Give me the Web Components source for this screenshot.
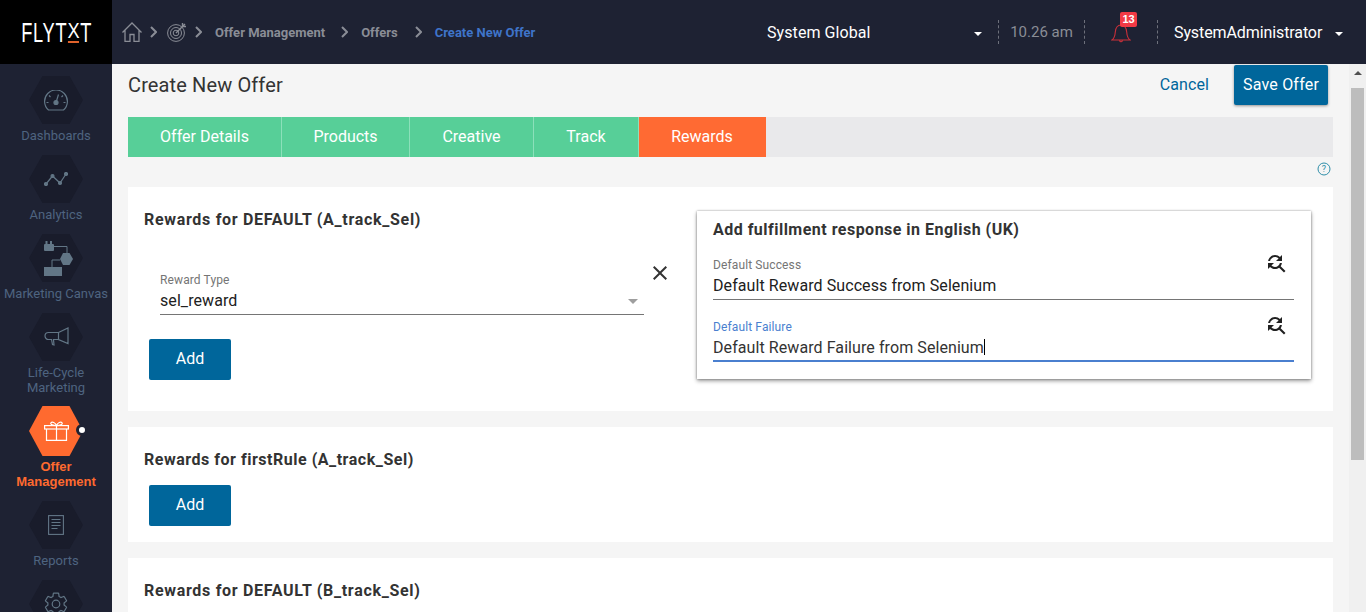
<!DOCTYPE html>
<html><head><meta charset="utf-8"><title>Create New Offer</title>
<style>
html,body{margin:0;height:100%;overflow:hidden}
body{font-family:Roboto,"Liberation Sans",sans-serif;background:#f5f5f5}
</style></head><body>
<app-shell>
  <top-bar slot="top"></top-bar>
  <side-nav slot="side"></side-nav>
  <offer-page slot="main"></offer-page>
</app-shell>
<script>
function def(name,html){
  customElements.define(name,class extends HTMLElement{
    connectedCallback(){
      if(this.shadowRoot)return;
      const r=this.attachShadow({mode:'open'});
      r.innerHTML=typeof html==='function'?html(this):html;
    }
  });
}
def('app-shell',`<style>
:host{display:grid;grid-template-columns:112px 1fr 17px;grid-template-rows:64px 1fr;width:1366px;height:612px;overflow:hidden}
.t{grid-column:1/4}.s{min-height:0;overflow:hidden}.m{min-height:0;overflow:hidden}
</style><div class="t"><slot name="top"></slot></div><div class="s"><slot name="side"></slot></div><div class="m"><slot name="main"></slot></div><scroll-rail></scroll-rail>`);
def('scroll-rail',`<style>
:host{display:flex;flex-direction:column;align-items:center;background:#f0f0f0}
.a{height:24px;padding-top:7px;box-sizing:border-box}
.a i{display:block;width:0;height:0;border:4px solid transparent;border-top:0;border-bottom:4px solid #505050}
.th{width:13px;height:372px;background:#bdbdbd}
</style><div class="a"><i></i></div><div class="th"></div>`);
const chev=m=>`<svg style="margin-left:${m}px;flex:none" width="7" height="12" viewBox="0 0 7 12" fill="none" stroke="#8a8d96" stroke-width="2"><path d="M1 1l5 5-5 5"/></svg>`;
def('top-bar',`<style>
:host{display:flex;height:64px;background:#1e2233;color:#fff;align-items:stretch}
.lw{width:112px;background:#000;display:flex;align-items:center;justify-content:center;overflow:hidden;flex:none}
.logo{font:400 28px/20px "Liberation Sans",sans-serif;height:20px;letter-spacing:1.2px;transform:scaleX(.65);white-space:nowrap;position:relative;margin-left:1px;margin-top:2px}
.logo u{text-decoration:none;position:relative;display:inline-block}
.logo u b{font-weight:400;display:inline-block;transform:scaleY(.78);transform-origin:50% 0}
.logo u::after{content:"";position:absolute;left:1px;right:2px;top:18px;height:2px;background:#e0622b}
.crumbs{display:flex;align-items:center;flex:none;width:640px;padding-left:10px;box-sizing:border-box;font:700 13px/1 Roboto,sans-serif;color:#8a8d96}
.cur{color:#3f74c9}
.sys{font:400 16px/1 Roboto,sans-serif;color:#fff;width:215px;display:flex;align-items:center;justify-content:space-between;box-sizing:border-box;margin-left:15px;padding-top:2px;flex:none}
.sys span{letter-spacing:.08px}
.tri{width:0;height:0;border:4.500px solid transparent;border-top:4.500px solid #fff;border-bottom:0;display:block;flex:none;margin-top:1px}
.d{width:0;height:24px;border-left:1px dashed #6d707b;align-self:center;flex:none}
.time{font:400 15px/1 Roboto,sans-serif;color:#8a8d96;width:85px;text-align:center;align-self:center;flex:none}
.bell{width:72px;position:relative;display:flex;justify-content:center;align-items:flex-start;flex:none}
.bell svg{margin-top:24px;margin-left:-1px}
.badge{position:absolute;left:35px;top:12px;width:17px;height:15px;background:#f23a45;border-radius:2px;font:700 11px/15px "Liberation Sans",sans-serif;text-align:center;color:#fff}
.user{font:400 16px/1 Roboto,sans-serif;display:flex;align-items:center;margin-left:16px;color:#fff;padding-top:2px;letter-spacing:-.1px}
.user .tri{margin-left:13px}
</style>
<div class="lw"><div class="logo">FLYT<u><b>X</b></u>T</div></div>
<div class="crumbs">
<svg width="20" height="20" viewBox="0 0 20 20" fill="none" stroke="#8a8d96" stroke-width="1.300" style="flex:none"><path d="M.5 10.500 10 1l9.500 9.500M3 8.500v11h5v-7h4v7h5v-11"/></svg>
${chev(8)}
<svg width="20" height="20" viewBox="0 0 20 20" fill="none" stroke="#8a8d96" stroke-width="1" style="margin-left:10px;flex:none"><circle cx="9" cy="11" r="8.400"/><circle cx="9" cy="11" r="5.500"/><circle cx="9" cy="11" r="2.800"/><path d="M9 11 18 2M15.500 1v3.500H19" stroke-width="1.400"/></svg>
${chev(8)}
<span style="margin-left:13px">Offer Management</span>
${chev(16)}
<span style="margin-left:13px">Offers</span>
${chev(17)}
<span class="cur" style="margin-left:13px">Create New Offer</span>
</div>
<div class="sys"><span>System Global</span><i class="tri"></i></div>
<div class="d" style="margin-left:16px"></div>
<div class="time">10.26 am</div>
<div class="d"></div>
<div class="bell"><svg width="20" height="19" viewBox="0 0 20 19" fill="none" stroke="#c9303a" stroke-width="1.100"><path d="M1 16c2-1.500 3-4 3.300-8C4.700 3.500 7 1 10 1s5.300 2.500 5.700 7c.3 4 1.300 6.500 3.300 8zM8.700 16.500a1.300 1.300 0 0 0 2.600 0"/></svg><span class="badge">13</span></div>
<div class="d"></div>
<div class="user"><span>SystemAdministrator</span><i class="tri"></i></div>`);
const hex=`clip-path:polygon(25% 0,75% 0,100% 50%,75% 100%,25% 100%,0 50%)`;
def('nav-item',h=>{
 const on=h.hasAttribute('active');
 const lab=h.getAttribute('label');
 return `<style>
:host{display:flex;flex-direction:column;align-items:center;margin-bottom:12px;width:112px}
.wrap{position:relative;width:54px;height:${on?50:48}px;${on?'margin-top:-1px':''}}
.hex{width:54px;height:100%;background:${on?'#ff6a2f':'#191c2b'};${hex};display:flex;align-items:center;justify-content:center}
.dot{position:absolute;left:47px;top:18px;width:6px;height:6px;border-radius:50%;background:#fff;border:3px solid #1e2233}
.l{font:${on?700:400} 13px/15px ${on?'"Liberation Sans"':'Roboto'},sans-serif;color:${on?'#ff6a2f':'#4e6480'};text-align:center;margin-top:${on?3:4}px;white-space:nowrap}
</style><div class="wrap"><div class="hex"><slot></slot></div>${on?'<div class="dot"></div>':''}</div>${lab?`<div class="l">${lab}</div>`:''}`});
def('side-nav',`<style>
:host{display:flex;flex-direction:column;height:100%;background:#1e2233;padding-top:12px;box-sizing:border-box;overflow:hidden}
svg{display:block}
</style>
<nav-item label="Dashboards"><svg width="24" height="21" viewBox="0 0 24 21" fill="none" stroke="#627686" stroke-width="1.200"><path d="M4.500 20a11.400 11.400 0 1 1 15 0z"/><circle cx="12" cy="12.500" r="2" fill="#627686"/><path d="M12 12.500 14.500 4.500M2.500 12.500h2M19.500 12.500h2M5 5.500l1.500 1.500M19 5.500 17.500 7"/></svg></nav-item>
<nav-item label="Analytics"><svg width="24" height="14" viewBox="0 0 24 14" fill="#627686" stroke="#627686" stroke-width="1.200"><path d="M2 12 8.500 4 16 11 22 2" fill="none"/><circle cx="2" cy="12" r="1.500"/><circle cx="8.500" cy="4" r="1.500"/><circle cx="16" cy="11" r="1.500"/><circle cx="22" cy="2" r="1.500"/></svg></nav-item>
<nav-item label="Marketing Canvas"><svg style="margin-left:5px" width="29" height="35" viewBox="0 0 29 35" fill="#627686"><rect x="0" y="3" width="10" height="7" rx="1"/><rect x="1.500" y="0" width="2" height="3"/><rect x="6" y="0" width="2" height="3"/><path d="M10 5.500h13V12M16 19H8v7" fill="none" stroke="#627686"/><path d="M19 12h6.500L29 18l-3.500 6H19l-3-6z"/><rect x="0" y="26" width="18" height="9"/></svg></nav-item>
<nav-item label="Life-Cycle<br>Marketing"><svg width="25" height="20" viewBox="0 0 25 20" fill="none" stroke="#627686" stroke-width="1.200"><path d="M14.500 5.500 24 1v15.500l-9.500-4zM14.500 5.500h-10a3.500 3.500 0 0 0 0 7h3l1 5 1.500.5-.5-5.500h5"/></svg></nav-item>
<nav-item active label="Offer<br>Management"><svg width="25" height="20" viewBox="0 0 25 20" fill="none" stroke="#fff" stroke-width="1.200"><rect x=".6" y="4.600" width="23.800" height="3.400"/><path d="M2.500 8v11.400h20V8M12.500 4.600v14.800M12.500 4.600C9 4.600 6 3.500 7 1.800 8 .2 11.500 1.500 12.500 4.600 13.500 1.500 17 .2 18 1.800 19 3.500 16 4.600 12.500 4.600z"/></svg></nav-item>
<nav-item label="Reports"><svg width="16" height="20" viewBox="0 0 16 20" fill="none" stroke="#627686" stroke-width="1.100"><rect x=".6" y=".6" width="14.800" height="18.800"/><path d="M3.500 4.500h9M3.500 7.500h9M3.500 10.500h9M3.500 13.500h6"/></svg></nav-item>
<nav-item><svg width="26" height="26" viewBox="0 0 24 24" fill="none" stroke="#627686" stroke-width="1.100"><circle cx="12" cy="12" r="3.500"/><path d="M19.430 12.980c.04-.32.07-.64.07-.98s-.03-.66-.07-.98l2.110-1.650c.19-.15.24-.42.12-.64l-2-3.460c-.12-.22-.39-.3-.61-.22l-2.490 1c-.52-.4-1.080-.73-1.690-.98l-.38-2.650C14.460 2.180 14.250 2 14 2h-4c-.25 0-.46.18-.49.42l-.38 2.650c-.61.25-1.170.59-1.690.98l-2.490-1c-.23-.09-.49 0-.61.22l-2 3.460c-.13.22-.07.49.12.64l2.110 1.650c-.04.32-.07.65-.07.98s.03.66.07.98l-2.110 1.650c-.19.15-.24.42-.12.64l2 3.460c.12.22.39.3.61.22l2.490-1c.52.4 1.080.73 1.690.98l.38 2.650c.03.24.24.42.49.42h4c.25 0 .46-.18.49-.42l.38-2.650c.61-.25 1.170-.59 1.690-.98l2.490 1c.23.09.49 0 .61-.22l2-3.460c.12-.22.07-.49-.12-.64l-2.110-1.650z"/></svg></nav-item>`);
def('tab-bar',`<style>:host{display:flex;height:40px;background:#e9e9eb}</style><slot></slot>`);
def('tab-item',h=>`<style>
:host{display:flex;align-items:center;justify-content:center;box-sizing:border-box;height:40px;padding-bottom:2px;font:400 16px Roboto,sans-serif;color:#fff;background:${h.hasAttribute('active')?'#ff6a33':'#57cf98'};border-right:1px solid ${h.hasAttribute('active')?'#ff6a33':'#8ce0ba'};width:${h.getAttribute('w')}px}
</style><slot></slot>`);
def('blue-btn',`<style>
:host{display:inline-flex;align-items:center;justify-content:center;box-sizing:border-box;width:82px;height:41px;background:#00669b;color:#fff;border-radius:2px;font:400 16px Roboto,sans-serif}
</style><slot></slot>`);
def('text-field',h=>{const f=h.hasAttribute('focus');return `<style>
:host{display:block;position:relative;height:42px}
.l{font:400 12px/14px Roboto,sans-serif;color:${f?'#4a7fcf':'#757575'};letter-spacing:.12px}
.v{font:400 16px/20px Roboto,sans-serif;color:${f?'#333':'#212121'};margin-top:4px;height:20px;white-space:nowrap;letter-spacing:.08px}
.u{position:absolute;left:0;right:0;top:${f?40:41}px;border-bottom:${f?2:1}px solid ${f?'#4a7fcf':'#757575'}}
.car{display:inline-block;width:1px;height:16px;background:#000;vertical-align:-2px}
svg{position:absolute;right:6px;top:-7px}
.ar{position:absolute;right:6px;top:26px;border:5px solid transparent;border-top:5px solid #9e9e9e;border-bottom:0}
</style><div class="l">${h.getAttribute('label')}</div><div class="v">${h.getAttribute('value')}${f?'<span class="car"></span>':''}</div><div class="u"></div>${h.hasAttribute('select')?'<i class="ar"></i>':''}${h.hasAttribute('lookup')?'<svg width="24" height="24" viewBox="0 0 24 24" fill="#212121"><path d="M11 6c1.380 0 2.630.56 3.540 1.460L12 10h6V4l-2.050 2.050C14.680 4.780 12.930 4 11 4c-3.530 0-6.430 2.610-6.920 6H6.100c.46-2.280 2.480-4 4.900-4zm5.640 9.140c.66-.9 1.120-1.970 1.280-3.140H15.900c-.46 2.280-2.480 4-4.900 4-1.380 0-2.630-.56-3.540-1.460L10 12H4v6l2.050-2.050C7.320 17.220 9.070 18 11 18c1.550 0 2.980-.51 4.140-1.360L20 21.490 21.490 20l-4.850-4.860z"/></svg>':''}`});
def('reward-card',`<style>
:host{display:block;background:#fff;padding:23px 16px 16px;box-sizing:border-box;margin-bottom:16px}
h3{margin:0;font:700 16px/20px Roboto,sans-serif;color:#333;letter-spacing:var(--ls,.52px)}
</style><h3><slot name="title"></slot></h3><slot></slot>`);
def('offer-page',`<style>
:host{display:block;padding:0 16px;height:548px;overflow:hidden;box-sizing:border-box;background:#f5f5f5}
.top{display:flex;align-items:center;height:53px;padding:1px 5px 12px 0;box-sizing:border-box;color:#333}
h1{font:400 20px/1 Roboto,sans-serif;margin:0;flex:1;color:#333;letter-spacing:.12px}
.cancel{font:400 16px Roboto,sans-serif;color:#00669b;margin-right:25px;padding-bottom:2px;letter-spacing:.1px}
.save{width:94px;height:40px;letter-spacing:.2px;padding-bottom:2px;box-shadow:0 1px 3px rgba(0,0,0,.4)}
.help{display:flex;justify-content:flex-end;height:30px;padding:5px 2px 0 0;box-sizing:border-box}
.r{display:grid;grid-template-columns:1fr 614px;margin:-19px 6px 0 0}
.left{position:relative}
.sel{margin:62px 0 0 16px;width:484px}
.xx{position:absolute;left:504px;top:50px}
.add{margin:24px 0 0 5px;padding-bottom:2px}
.add2{margin:15px 0 0 5px;padding-bottom:2px}
.pop{background:#fff;height:168px;box-sizing:border-box;padding:8px 17px 0 16px;box-shadow:0 2px 4px rgba(0,0,0,.4),0 0 2px rgba(0,0,0,.35)}
h4{margin:0 0 17px;font:700 16px/22px Roboto,sans-serif;color:#333;letter-spacing:.48px}
.pop text-field+text-field{margin-top:20px}
</style>
<div class="top"><h1>Create New Offer</h1><span class="cancel">Cancel</span><blue-btn class="save">Save Offer</blue-btn></div>
<tab-bar><tab-item w="154">Offer Details</tab-item><tab-item w="128">Products</tab-item><tab-item w="124">Creative</tab-item><tab-item w="105">Track</tab-item><tab-item active w="127">Rewards</tab-item></tab-bar>
<div class="help"><svg width="14" height="14" viewBox="0 0 14 14" fill="none" stroke="#2f8ea8"><circle cx="7" cy="7" r="6"/><text x="7" y="10.200" text-anchor="middle" font-size="9" font-family="Roboto" fill="#2f8ea8" stroke="none">?</text></svg></div>
<reward-card style="height:224px;--ls:.69px"><span slot="title">Rewards for DEFAULT (A_track_Sel)</span>
<div class="r"><div class="left"><text-field class="sel" select label="Reward Type" value="sel_reward"></text-field><svg class="xx" width="24" height="24" viewBox="0 0 24 24" fill="#333"><path d="M19 6.410 17.590 5 12 10.590 6.410 5 5 6.410 10.590 12 5 17.590 6.410 19 12 13.410 17.590 19 19 17.590 13.410 12z"/></svg><blue-btn class="add">Add</blue-btn></div>
<div class="pop"><h4>Add fulfillment response in English (UK)</h4><text-field lookup label="Default Success" value="Default Reward Success from Selenium"></text-field><text-field lookup focus label="Default Failure" value="Default Reward Failure from Selenium"></text-field></div></div>
</reward-card>
<reward-card style="height:115px"><span slot="title">Rewards for firstRule (A_track_Sel)</span><blue-btn class="add2">Add</blue-btn></reward-card>
<reward-card style="height:115px;--ls:.69px"><span slot="title">Rewards for DEFAULT (B_track_Sel)</span></reward-card>`);
</script>
</body></html>
